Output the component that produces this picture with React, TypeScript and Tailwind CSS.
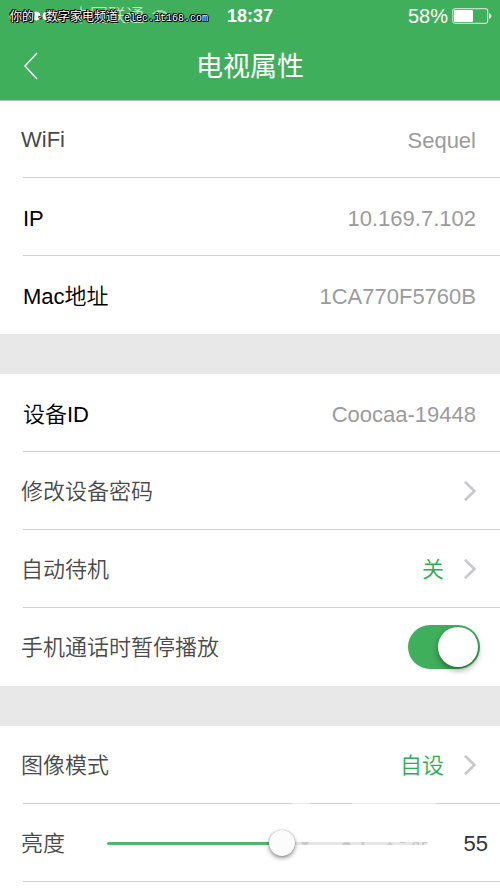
import React, { useState } from "react";

const FONT = "font-['Liberation_Sans','Noto_Sans_CJK_SC',sans-serif]";

function Chevron() {
  return (
    <svg className="h-5 w-3 shrink-0" viewBox="0 0 12 20" fill="none" stroke="#c7c7cc" strokeWidth="2.6" aria-hidden="true">
      <path d="M1 0.8 L10.4 10 L1 19.2" />
    </svg>
  );
}

function Row({ last = false, children }: { last?: boolean; children: React.ReactNode }) {
  return (
    <li className="h-[78px] pl-[23px]">
      <div className={`relative flex h-full items-center pr-6 ${last ? "" : "border-b border-[#d2d2d4]"}`}>{children}</div>
    </li>
  );
}

function InfoRow({ label, value, soft = false, last = false }: { label: string; value: string; soft?: boolean; last?: boolean }) {
  return (
    <Row last={last}>
      <span className={soft ? "-ml-0.5 pt-0.5 text-[#4a4a4a]" : "pt-1 font-[350] text-black"}>{label}</span>
      <span className="ml-auto pt-1 text-[#9b9b9b]">{value}</span>
    </Row>
  );
}

function LinkRow({ label, value }: { label: string; value?: string }) {
  return (
    <Row>
      <button type="button" className="-ml-0.5 flex flex-1 items-center text-left text-[#4a4a4a]">
        <span className="pt-0.5 font-[350]">{label}</span>
        <span className="mr-5 ml-auto pt-0.5 font-[350] text-[#2eac52]">{value}</span>
        <Chevron />
      </button>
    </Row>
  );
}

export default function App() {
  const [pause, setPause] = useState(true);
  const [light, setLight] = useState(55);
  return (
    <div className={`${FONT} relative bg-white text-[22px] leading-8`}>
      <header className="h-[100px] bg-[#40af5c] text-white">
        <div className="grid h-8 grid-cols-3 items-center px-2 text-lg leading-8">
          <div className="flex items-center gap-2 text-white">
            <svg className="h-3 w-14 shrink-0" viewBox="0 0 56 12" fill="white" stroke="white" aria-hidden="true">
              <circle cx="6" cy="6" r="4" />
              <circle cx="17" cy="6" r="4" />
              <circle cx="28" cy="6" r="4" />
              <circle cx="39" cy="6" r="4" />
              <circle cx="50" cy="6" r="4" fill="none" />
            </svg>
            <span className="font-light whitespace-nowrap opacity-80">中国联通</span>
            <svg className="h-3 w-4 shrink-0 opacity-50" viewBox="0 0 16 12" fill="none" stroke="white" strokeWidth="2" aria-hidden="true">
              <path d="M1 4 Q8 -2 15 4 M4 7 Q8 3.5 12 7" />
              <circle cx="8" cy="10" r="1" fill="white" />
            </svg>
          </div>
          <span className="text-center font-bold">18:37</span>
          <div className="flex items-center justify-end gap-1 text-xl leading-8">
            <span>58%</span>
            <svg className="h-4 w-10" viewBox="0 0 40 16" fill="none" aria-hidden="true">
              <rect x="0.7" y="0.7" width="35" height="14.6" rx="2.5" stroke="white" strokeOpacity="0.65" strokeWidth="1.2" />
              <rect x="2" y="2" width="19" height="12" rx="1" fill="white" />
              <path d="M37 5 Q42 8 37 11 Z" fill="white" />
            </svg>
          </div>
        </div>
        <div className="grid h-[68px] grid-cols-[48px_1fr_48px] items-center">
          <button type="button" aria-label="返回" className="flex justify-end pr-2.5">
            <svg className="h-7 w-3.5" viewBox="0 0 14 28" fill="none" stroke="white" strokeWidth="1.4">
              <path d="M13 1 L1 14 L13 27" />
            </svg>
          </button>
          <h1 className="pt-0.5 text-center text-[27px] font-normal">电视属性</h1>
        </div>
      </header>

      <main>
        <ul className="shadow-[inset_0_1px_0_#b2c0b6]">
          <InfoRow label="WiFi" value="Sequel" soft />
          <InfoRow label="IP" value="10.169.7.102" />
          <InfoRow label="Mac地址" value="1CA770F5760B" last />
        </ul>
        <div className="h-10 bg-[#e8e8e8]" />
        <ul>
          <InfoRow label="设备ID" value="Coocaa-19448" />
          <LinkRow label="修改设备密码" />
          <LinkRow label="自动待机" value="关" />
          <Row last>
            <label htmlFor="pause" className="-ml-0.5 pt-0.5 font-[350] text-[#4a4a4a]">手机通话时暂停播放</label>
            <input
              id="pause"
              type="checkbox"
              role="switch"
              checked={pause}
              onChange={(e) => setPause(e.target.checked)}
              className="-mr-1 ml-auto flex h-11 w-[72px] appearance-none items-center rounded-full bg-[#d8d8d8] p-0.5 before:size-10 before:rounded-full before:bg-white before:shadow-[0_3px_6px_rgba(0,0,0,0.4)] checked:justify-end checked:bg-[#40af5c]"
            />
          </Row>
        </ul>
        <div className="h-10 bg-[#e8e8e8]" />
        <ul>
          <LinkRow label="图像模式" value="自设" />
          <Row>
            <svg className="absolute -top-px right-16 h-px w-36" viewBox="0 0 144 1" aria-hidden="true">
              <path d="M0 0.5 H18 M60 0.5 H144" stroke="#e8e8e8" />
            </svg>
            <label htmlFor="light" className="-ml-0.5 pt-0.5 font-[350] text-[#4a4a4a]">亮度</label>
            <div className="relative mr-6 ml-[42px] flex min-w-0 flex-1 pt-0.5">
              <input
                id="light"
                type="range"
                min="0"
                max="100"
                value={light}
                onChange={(e) => setLight(Number(e.target.value))}
                style={{ "--fill": `${light}%` } as React.CSSProperties}
                className="h-8 w-full appearance-none bg-transparent [&::-webkit-slider-runnable-track]:h-[3px] [&::-webkit-slider-runnable-track]:rounded-full [&::-webkit-slider-runnable-track]:bg-[linear-gradient(to_right,#4db86b_var(--fill),#e6e6e6_var(--fill))] [&::-webkit-slider-thumb]:-mt-3 [&::-webkit-slider-thumb]:size-[26px] [&::-webkit-slider-thumb]:appearance-none [&::-webkit-slider-thumb]:rounded-full [&::-webkit-slider-thumb]:bg-[#fcfcfc] [&::-webkit-slider-thumb]:shadow-[0_2px_4px_rgba(0,0,0,0.45),0_0_1px_rgba(0,0,0,0.4)]"
              />
              <svg className="pointer-events-none absolute right-0 bottom-[15px] h-[3px] w-32" viewBox="0 0 128 3" fill="#c9c9c9" aria-hidden="true">
                <path d="M1 0 H9 L7 3 H3 Z M42 3 L44 0 H49 L51 3 Z M61 3 L62 0 H65 L64 3 Z M87 3 L90 0 L93 3 Z M100 0 H105 V1 H100 Z M112 3 L114 0 H119 V3 H117 V1 H115 L114 3 Z M122 0 H127 V1 H124 V3 H122 Z" />
              </svg>
            </div>
            <output htmlFor="light" className="-mr-3 w-9 pt-0.5 text-right text-[#333]">{light}</output>
          </Row>
        </ul>
      </main>

      <p className="absolute top-2 left-2.5 text-xs leading-[18px] whitespace-nowrap text-white [text-shadow:1px_0_#000,-1px_0_#000,0_1px_#000,0_-1px_#000,1px_1px_#000,-1px_-1px_#000]">
        你的<span className="inline-block w-3 text-center">·</span>数字家电频道
        <span className="font-['Liberation_Mono',monospace] text-[10px]"> elec.it168.com</span>
      </p>
    </div>
  );
}
